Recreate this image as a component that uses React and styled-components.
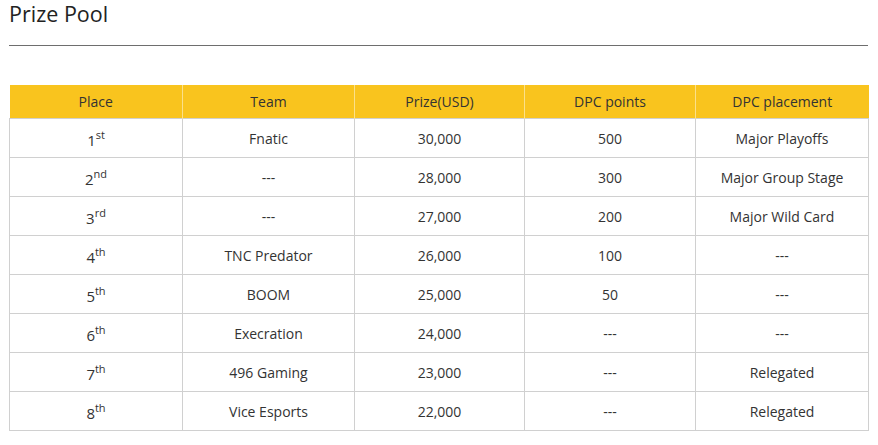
import styled, { createGlobalStyle } from "styled-components";

const GlobalStyle = createGlobalStyle`
    body {
        margin: 0;
        background: #fff;
        font-family: "Open Sans", "Noto Sans", sans-serif;
        color: #333;
    }
`;

const rows = [
    { place: "1", suf: "st", team: "Fnatic", prize: "30,000", points: "500", placement: "Major Playoffs" },
    { place: "2", suf: "nd", team: "---", prize: "28,000", points: "300", placement: "Major Group Stage" },
    { place: "3", suf: "rd", team: "---", prize: "27,000", points: "200", placement: "Major Wild Card" },
    { place: "4", suf: "th", team: "TNC Predator", prize: "26,000", points: "100", placement: "---" },
    { place: "5", suf: "th", team: "BOOM", prize: "25,000", points: "50", placement: "---" },
    { place: "6", suf: "th", team: "Execration", prize: "24,000", points: "---", placement: "---" },
    { place: "7", suf: "th", team: "496 Gaming", prize: "23,000", points: "---", placement: "Relegated" },
    { place: "8", suf: "th", team: "Vice Esports", prize: "22,000", points: "---", placement: "Relegated" },
];

const headers = ["Place", "Team", "Prize(USD)", "DPC points", "DPC placement"];

const App = () => {
    return (
        <Page>
            <GlobalStyle />
            <Title>Prize Pool</Title>
            <Divider />
            <Table>
                <colgroup>
                    <col style={{ width: 173 }} />
                    <col style={{ width: 172 }} />
                    <col style={{ width: 170 }} />
                    <col style={{ width: 171 }} />
                    <col />
                </colgroup>
                <thead>
                    <tr>
                        {headers.map((h) => (
                            <Th key={h}>{h}</Th>
                        ))}
                    </tr>
                </thead>
                <tbody>
                    {rows.map((r) => (
                        <tr key={r.place}>
                            <Td>
                                <Rank>{r.place}</Rank>
                                <Sup>{r.suf}</Sup>
                            </Td>
                            <Td>{r.team}</Td>
                            <Td>{r.prize}</Td>
                            <Td>{r.points}</Td>
                            <Td>{r.placement}</Td>
                        </tr>
                    ))}
                </tbody>
            </Table>
        </Page>
    );
};

export default App;

const Page = styled.div`
    padding: 0 10px 0 9px;
`;

const Title = styled.h2`
    margin: 0;
    font-size: 21.5px;
    font-weight: 400;
    line-height: 27px;
    color: #222;
`;

const Divider = styled.div`
    height: 1px;
    background: #6e6e6e;
    margin: 18px 0 39px 0;
`;

const Table = styled.table`
    width: 860px;
    border-collapse: collapse;
    table-layout: fixed;
    font-size: 14px;
`;

const Th = styled.th`
    background: #f9c41e;
    color: #333;
    font-weight: 400;
    height: 33px;
    padding: 0;
    text-align: center;
    border-left: 1px solid #fbe08a;
    &:first-child {
        border-left: none;
    }
`;

const Td = styled.td`
    height: 38px;
    padding: 0;
    text-align: center;
    color: #333;
    border: 1px solid #d0d0d0;
`;

const Rank = styled.span`
    font-size: 15px;
    position: relative;
    top: 2px;
    line-height: 1;
`;

const Sup = styled.sup`
    font-size: 11px;
    vertical-align: 5px;
    line-height: 0;
`;
